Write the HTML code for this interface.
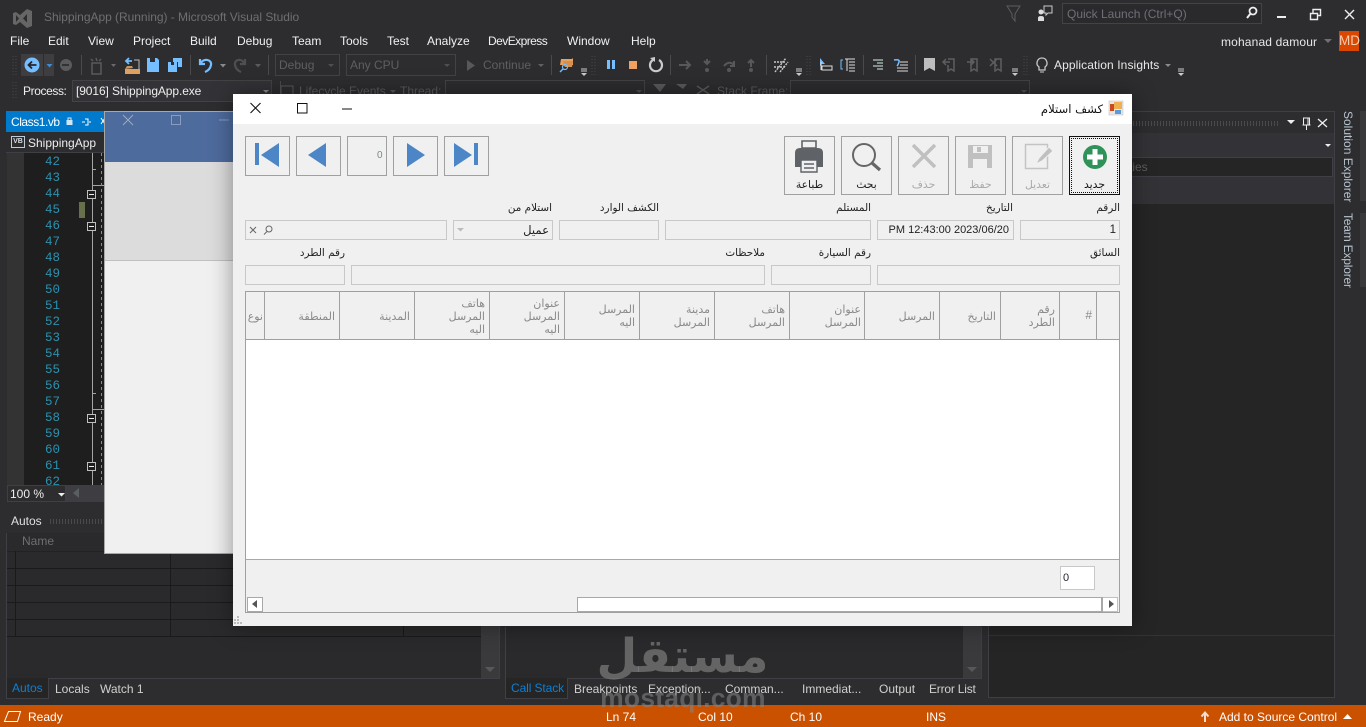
<!DOCTYPE html>
<html lang="en"><head><meta charset="utf-8"><title>ShippingApp</title>
<style>
html,body{margin:0;padding:0;width:1366px;height:727px;overflow:hidden;background:#2d2d30}
body{position:relative;font-family:"Liberation Sans","DejaVu Sans",sans-serif;font-size:12px;color:#f1f1f1}
.a,.t{position:absolute}
.t{white-space:nowrap;line-height:16px}
.ar{font-family:"DejaVu Sans",sans-serif;font-size:10.4px;color:#222;direction:rtl;text-align:right;line-height:13px;position:absolute;white-space:nowrap}
.f{position:absolute;box-sizing:border-box;height:20px;border:1px solid #c8c8c8;background:#f0f0f0;font-size:11px;color:#222}
.b{position:absolute;box-sizing:border-box;border:1px solid #a0a0a0;background:#f0f0f0}
.gh{position:absolute;font-family:"DejaVu Sans",sans-serif;font-size:11px;line-height:13px;color:#8a8a8a;direction:rtl;text-align:right;white-space:nowrap}
.vl{position:absolute;top:291px;height:49px;width:1px;background:#a0a0a0}
.ln{position:absolute;left:45px;width:16px;font-family:"Liberation Mono",monospace;font-size:12.5px;line-height:16px;color:#2b91af}
.m{top:33px}
.g{background:#1a1a1c;position:absolute}
svg{position:absolute;overflow:visible}
</style></head><body>

<!-- title bar -->
<svg style="left:0;top:0" width="1366" height="110" viewBox="0 0 1366 110" fill="none">
<path d="M13 13l3-1 4 3 7-6 5 2v15l-5 2-7-6-4 3-3-1zM16 15v7l3-3.500zM27 14l-4 4.500 4 4z" fill="#666" fill-rule="evenodd"/>
<path d="M1007 6h13l-5 8v7l-3-4v-3z" stroke="#5d5d60"/>
<circle cx="1041" cy="12" r="2.500" fill="#ddd"/><path d="M1038 21v-3q0-2 3-2t3 2v3z" fill="#ddd"/><path d="M1044 6h8v7h-4l-2 2v-2h-2z" stroke="#ccc"/>
<rect x="1062.500" y="3.500" width="199" height="20" stroke="#434346" fill="#2a2a2d"/>
<circle cx="1253" cy="11" r="3.500" stroke="#eee" stroke-width="1.800"/><path d="M1251 13l-4 5" stroke="#eee" stroke-width="2"/>
<path d="M1277 17h9" stroke="#eee" stroke-width="2"/>
<path d="M1310.500 13.500h7v6h-7zM1313 13v-3.500h7.500v6h-2.500" stroke="#eee" stroke-width="1.400"/>
<path d="M1345 10l9 9M1354 10l-9 9" stroke="#eee" stroke-width="1.400"/>

<!-- toolbar 1 -->
<path d="M13 56v19M16 56v19" stroke="#47474a" stroke-dasharray="1 2"/>
<rect x="21" y="54" width="22" height="22" fill="#3e3e40"/><rect x="44" y="54" width="10" height="22" fill="#3e3e40"/>
<circle cx="32" cy="65" r="7.500" fill="#75beff"/><path d="M36.500 65h-7M32 61.500L28.500 65 32 68.500" stroke="#26262a" stroke-width="1.800"/>
<path d="M46.500 64h6l-3 3.500z" fill="#3a8ed8"/>
<circle cx="66" cy="65" r="6" fill="#5a5a5c"/><path d="M62 65h7" stroke="#2d2d30" stroke-width="1.800"/>
<path d="M81.500 55v20" stroke="#4a4a4c"/>
<path d="M92 63h9v11h-9zM96 58l1 3M91 59l2 2M101 59l-2 2" stroke="#5a5a5c" stroke-width="1.500"/>
<path d="M111 64h5l-2.500 3z" fill="#6a6a6c"/>
<path d="M125 69h15v5h-15z" fill="#e0a060"/><path d="M125 69l2-3h5l1 2" fill="#c9955b"/><path d="M127 61h5M129 58l-3 3 3 3" stroke="#75beff" stroke-width="1.800"/><path d="M134 60h5v9" stroke="#bbb"/>
<path d="M147 58h10l2 2v12h-12z" fill="#75beff"/><rect x="150" y="58" width="5" height="4" fill="#2d2d30"/>
<path d="M168 62h9v10h-9z" fill="#75beff"/><path d="M173 58h9v9h-4v-5h-5z" fill="#75beff"/><rect x="171" y="62" width="3" height="3" fill="#2d2d30"/>
<path d="M190.500 55v20" stroke="#4a4a4c"/>
<path d="M200 59v5h5M200.500 63.500C203 58 212 59 211 65q-1 5-6 7" stroke="#75beff" stroke-width="2.200"/>
<path d="M220 64h6l-3 3.500z" fill="#8a8a8c"/>
<path d="M245 59v5h-5M244.500 63.500C242 58 234 59 235 65q1 5 6 7" stroke="#4f4f52" stroke-width="2.200"/>
<path d="M255 64h6l-3 3.500z" fill="#5a5a5c"/>
<path d="M268.500 55v20" stroke="#4a4a4c"/>
<rect x="275.500" y="54.500" width="64" height="21" stroke="#434346"/><path d="M328 64h6l-3 3z" fill="#4f4f52"/>
<rect x="346.500" y="54.500" width="109" height="21" stroke="#434346"/><path d="M444 64h6l-3 3z" fill="#4f4f52"/>
<path d="M467 60l8 5.500-8 5.500z" fill="#58585a"/>
<path d="M538 64h6l-3 3z" fill="#606062"/>
<path d="M551.500 55v20" stroke="#4a4a4c"/>
<path d="M561 59h11l1-1h0v7h-13z" fill="#e8a15d"/><path d="M564 66l-1-5h10l-1 6h-7z" fill="#d88f4a"/><circle cx="565" cy="67" r="2.500" stroke="#75beff" stroke-width="1.200"/><path d="M563 69l-3 3" stroke="#75beff" stroke-width="1.400"/>
<path d="M581 69h6M581 71h6" stroke="#ccc"/><path d="M581 73h6l-3 3z" fill="#ccc"/>
<path d="M592 56v19M595 56v19" stroke="#47474a" stroke-dasharray="1 2"/>
<rect x="607" y="60" width="3" height="9" fill="#75beff"/><rect x="612" y="60" width="3" height="9" fill="#75beff"/>
<rect x="629" y="61" width="8" height="8" fill="#f0a060"/>
<path d="M659 60a6 6 0 1 1-6 0" stroke="#ccc" stroke-width="2.200"/><path d="M650 58l5-1 0 5z" fill="#ccc"/>
<path d="M670.500 55v20" stroke="#4a4a4c"/>
<path d="M679 65h11M686 61l4 4-4 4" stroke="#58585a" stroke-width="2"/>
<path d="M707 59v5M704 61l3 3 3-3" stroke="#58585a" stroke-width="2"/><circle cx="707" cy="70" r="2" fill="#58585a"/>
<path d="M724 66q5-6 10-1M734 61v5h-4" stroke="#58585a" stroke-width="2"/><circle cx="729" cy="70" r="2" fill="#58585a"/>
<path d="M751 67v-6M748 63l3-3 3 3" stroke="#58585a" stroke-width="2"/><circle cx="751" cy="70" r="2" fill="#58585a"/>
<path d="M766.500 55v20" stroke="#4a4a4c"/>
<path d="M775 72l11-14M780 72l8-10M774 62h12M774 67h12" stroke="#c8c8c8" stroke-width="1.400" stroke-dasharray="2 1"/>
<path d="M796 69h6M796 71h6" stroke="#ccc"/><path d="M796 73h6l-3 3z" fill="#ccc"/>
<path d="M807 56v19M810 56v19" stroke="#47474a" stroke-dasharray="1 2"/>
<path d="M820 58v8l2-2h3z" fill="#75beff"/><path d="M822 66h10v4h-10z M821 62v8" stroke="#ddd"/>
<path d="M843 60h-2v9h2" stroke="#75beff"/><path d="M845 59h10M849 62h6M849 65h6M849 68h6M849 71h6M847 59v12" stroke="#ddd"/>
<path d="M863.500 55v20" stroke="#4a4a4c"/>
<path d="M873 60h10M877 63h6M873 66h10M877 69h6" stroke="#d8efe0"/>
<path d="M894 60q6-1 5 2t-2 4" stroke="#75beff" stroke-width="1.500"/><path d="M900 62h8M900 65h8M897 68h11M897 71h11" stroke="#ddd"/>
<path d="M915.500 55v20" stroke="#4a4a4c"/>
<path d="M924 58h11v13l-5.500-3-5.500 3z" fill="#bdbdbd"/>
<path d="M948 59h6v12l-3-2-3 2v-6M943 62h7M946 59l-3 3 3 3" stroke="#5e5e60" stroke-width="1.500"/>
<path d="M971 59h6v12l-3-2-3 2zM967 62h7M971 59l3 3-3 3" stroke="#5e5e60" stroke-width="1.500"/>
<path d="M995 59h6v12l-3-2-3 2zM990 59l7 7M997 59l-7 7" stroke="#5e5e60" stroke-width="1.500"/>
<path d="M1012 69h6M1012 71h6" stroke="#ccc"/><path d="M1012 73h6l-3 3z" fill="#ccc"/>
<path d="M1024 56v19M1027 56v19" stroke="#47474a" stroke-dasharray="1 2"/>
<path d="M1042 58a5 5 0 0 1 3 9v3h-6v-3a5 5 0 0 1 3-9z" stroke="#c8c8c8" stroke-width="1.300"/><path d="M1040 72h4" stroke="#c8c8c8"/>
<path d="M1165 64h6l-3 3z" fill="#8a8a8c"/>
<path d="M1178 69h6M1178 71h6" stroke="#ccc"/><path d="M1178 73h6l-3 3z" fill="#ccc"/>
<!-- toolbar 2 -->
<path d="M13 82v18M16 82v18" stroke="#47474a" stroke-dasharray="1 2"/>
<rect x="72.500" y="80.500" width="199" height="21" stroke="#434346" fill="#333337"/><path d="M263 90h6l-3 3z" fill="#8a8a8c"/>
<path d="M280.500 81v14" stroke="#4a4a4c"/>
<rect x="281" y="86" width="12" height="12" stroke="#5a5a5c"/>
<path d="M390 90h6l-3 3z" fill="#58585a"/>
<rect x="445.500" y="80.500" width="199" height="21" stroke="#434346"/><path d="M636 90h6l-3 3z" fill="#4f4f52"/>
<path d="M653 84h13l-6 8z" fill="#5a5a5c"/><path d="M676 84h11l-4 5z" fill="#5a5a5c"/><path d="M697 86l12 8M709 86l-12 8" stroke="#5a5a5c" stroke-width="1.500"/>
<rect x="790.500" y="80.500" width="239" height="21" stroke="#434346"/><path d="M1021 90h6l-3 3z" fill="#4f4f52"/>
</svg>

<div class="t" style="left:44px;top:9px;color:#6f6f72;letter-spacing:-.03px">ShippingApp (Running) - Microsoft Visual Studio</div>
<div class="t m" style="left:10px">File</div><div class="t m" style="left:48px">Edit</div><div class="t m" style="left:88px">View</div><div class="t m" style="left:133px">Project</div><div class="t m" style="left:190px">Build</div><div class="t m" style="left:237px">Debug</div><div class="t m" style="left:292px">Team</div><div class="t m" style="left:340px">Tools</div><div class="t m" style="left:387px">Test</div><div class="t m" style="left:427px">Analyze</div><div class="t m" style="left:488px;letter-spacing:-.55px">DevExpress</div><div class="t m" style="left:567px">Window</div><div class="t m" style="left:631px">Help</div>
<div class="t" style="left:1067px;top:6px;color:#6f6f78">Quick Launch (Ctrl+Q)</div>
<div class="t" style="left:1221px;top:34px;letter-spacing:.15px;color:#e8e8e8">mohanad damour</div>
<svg style="left:1324px;top:39px" width="8" height="5"><path d="M0 0h8l-4 4z" fill="#707072"/></svg>
<div class="t" style="left:1339px;top:31px;width:20px;height:20px;background:#d94700;line-height:20px;text-align:center;color:#f7cdb0;font-size:13.5px">MD</div>
<div class="t" style="left:279px;top:57px;color:#5f5f62">Debug</div>
<div class="t" style="left:350px;top:57px;color:#5f5f62">Any CPU</div>
<div class="t" style="left:483px;top:57px;color:#5f5f62">Continue</div>
<div class="t" style="left:1054px;top:57px;color:#e8e8e8;letter-spacing:.1px">Application Insights</div>
<div class="t" style="left:23px;top:83px;color:#eee;letter-spacing:-.4px">Process:</div>
<div class="t" style="left:76px;top:83px;color:#eee;letter-spacing:-.1px">[9016] ShippingApp.exe</div>
<div class="t" style="left:299px;top:83px;color:#5a5a5d">Lifecycle Events</div>
<div class="t" style="left:400px;top:83px;color:#5a5a5d">Thread:</div>
<div class="t" style="left:717px;top:83px;color:#5a5a5d">Stack Frame:</div>

<!-- left editor -->
<div class="a" style="left:6px;top:111px;width:100px;height:21px;background:#007acc"></div>
<div class="t" style="left:11px;top:114px;color:#fff;letter-spacing:-.45px">Class1.vb</div>
<svg style="left:65px;top:116px" width="40" height="12" fill="none"><rect x="1.500" y="4" width="6" height="5" fill="#cfe6f7"/><path d="M3 4V2h3v2" stroke="#cfe6f7"/><path d="M20 3h3v6h-3M17 6h3M24 6h2" stroke="#fff"/><path d="M36 2l4 6M40 2l-4 6" stroke="#fff"/></svg>
<div class="a" style="left:6px;top:132px;width:100px;height:21px;background:#2d2d30;border-bottom:1px solid #3f3f46;box-sizing:border-box"></div>
<div class="a" style="left:11px;top:136px;width:12px;height:10px;border:1px solid #bcd;font:bold 7px/10px 'Liberation Sans',sans-serif;text-align:center;color:#ddd">VB</div>
<div class="t" style="left:28px;top:135px;color:#eee">ShippingApp</div>
<div class="a" style="left:7px;top:153px;width:17px;height:332px;background:#333333"></div>
<div class="a" style="left:24px;top:153px;width:80px;height:332px;background:#1e1e1e"></div>
<div class="ln" style="top:154px">42</div><div class="ln" style="top:170px">43</div><div class="ln" style="top:186px">44</div><div class="ln" style="top:202px">45</div><div class="ln" style="top:218px">46</div><div class="ln" style="top:234px">47</div><div class="ln" style="top:250px">48</div><div class="ln" style="top:266px">49</div><div class="ln" style="top:282px">50</div><div class="ln" style="top:298px">51</div><div class="ln" style="top:314px">52</div><div class="ln" style="top:330px">53</div><div class="ln" style="top:346px">54</div><div class="ln" style="top:362px">55</div><div class="ln" style="top:378px">56</div><div class="ln" style="top:394px">57</div><div class="ln" style="top:410px">58</div><div class="ln" style="top:426px">59</div><div class="ln" style="top:442px">60</div><div class="ln" style="top:458px">61</div>
<div class="a" style="left:0;top:0;width:104px;height:485px;overflow:hidden;pointer-events:none"><div class="ln" style="top:474px">62</div></div>
<svg style="left:0;top:150px" width="106" height="340" fill="none">
<path d="M92.500 3v332" stroke="#a5a5a5"/>
<path d="M93 19.500h3M93 35.500h11M93 243.500h3M93 259.500h11" stroke="#a5a5a5"/>
<path d="M101.500 3v332" stroke="#8a8a8a" stroke-dasharray="3 3"/>
<rect x="79" y="52" width="6" height="16" fill="#66704c"/>
<g fill="#1e1e1e" stroke="#c0c0c0"><rect x="87.500" y="40.500" width="8" height="8"/><rect x="87.500" y="72.500" width="8" height="8"/><rect x="87.500" y="264.500" width="8" height="8"/><rect x="87.500" y="312.500" width="8" height="8"/></g>
<path d="M89 44.500h5M89 76.500h5M89 268.500h5M89 316.500h5" stroke="#eee"/>
</svg>
<div class="a" style="left:7px;top:485px;width:59px;height:17px;background:#2d2d30;border:1px solid #3f3f46;box-sizing:border-box"></div>
<div class="a" style="left:66px;top:485px;width:38px;height:17px;background:#3e3e42"></div>
<div class="t" style="left:10px;top:486px;color:#eee">100 %</div>
<svg style="left:58px;top:493px" width="7" height="4"><path d="M0 0h7l-3.500 3.500z" fill="#eee"/></svg>
<svg style="left:73px;top:488px" width="6" height="10"><path d="M6 0v10L0 5z" fill="#5a5f5f"/></svg>

<!-- autos -->
<div class="a" style="left:6px;top:511px;width:494px;height:167px;border:1px solid #3f3f46;border-bottom:0;box-sizing:border-box;background:#2a2a2c"></div>
<div class="a" style="left:6px;top:511px;width:494px;height:22px;background:#2d2d30"></div>
<div class="t" style="left:11px;top:513px;color:#e0e0e0">Autos</div>
<div class="a" style="left:50px;top:519px;width:430px;height:5px;background:repeating-linear-gradient(90deg,#4a4a4c 0 1px,transparent 1px 3px)"></div>
<div class="t" style="left:22px;top:533px;color:#6f6f72">Name</div>
<div class="a" style="left:7px;top:533px;width:492px;height:18px;border-bottom:1px solid #222"></div>
<div class="g" style="left:15px;top:551px;width:1px;height:86px"></div><div class="g" style="left:170px;top:551px;width:1px;height:86px"></div><div class="g" style="left:403px;top:551px;width:1px;height:86px"></div>
<div class="g" style="left:7px;top:568px;width:474px;height:1px"></div><div class="g" style="left:7px;top:585px;width:474px;height:1px"></div><div class="g" style="left:7px;top:602px;width:474px;height:1px"></div><div class="g" style="left:7px;top:619px;width:474px;height:1px"></div><div class="g" style="left:7px;top:636px;width:474px;height:1px"></div>
<div class="a" style="left:481px;top:620px;width:18px;height:58px;background:#3a3a3d"></div>
<svg style="left:485px;top:667px" width="10" height="6"><path d="M0 0h10L5 5z" fill="#58585a"/></svg>
<div class="a" style="left:48px;top:678px;width:452px;height:1px;background:#3f3f46"></div>
<div class="a" style="left:6px;top:678px;width:43px;height:21px;background:#252526;border:1px solid #3f3f46;border-top:0;box-sizing:border-box"></div>
<div class="t" style="left:12px;top:680px;color:#0e7fd4">Autos</div><div class="t" style="left:55px;top:681px;color:#d0d0d0">Locals</div><div class="t" style="left:100px;top:681px;color:#d0d0d0">Watch 1</div>

<!-- call stack -->
<div class="a" style="left:505px;top:627px;width:477px;height:51px;background:#2a2a2c;border:1px solid #3f3f46;border-top:0;border-bottom:0;box-sizing:border-box"></div>
<div class="a" style="left:963px;top:620px;width:18px;height:58px;background:#3a3a3d"></div>
<svg style="left:967px;top:667px" width="10" height="6"><path d="M0 0h10L5 5z" fill="#58585a"/></svg>
<div class="a" style="left:567px;top:678px;width:415px;height:1px;background:#3f3f46"></div>
<div class="a" style="left:505px;top:678px;width:63px;height:21px;background:#252526;border:1px solid #3f3f46;border-top:0;box-sizing:border-box"></div>
<div class="t" style="left:511px;top:680px;color:#0e7fd4;letter-spacing:-.1px">Call Stack</div><div class="t" style="left:574px;top:681px;color:#d0d0d0">Breakpoints</div><div class="t" style="left:648px;top:681px;color:#d0d0d0">Exception...</div><div class="t" style="left:725px;top:681px;color:#d0d0d0">Comman...</div><div class="t" style="left:802px;top:681px;color:#d0d0d0">Immediat...</div><div class="t" style="left:879px;top:681px;color:#d0d0d0">Output</div><div class="t" style="left:929px;top:681px;color:#d0d0d0;letter-spacing:-.2px">Error List</div>

<!-- right panel -->
<div class="a" style="left:988px;top:111px;width:347px;height:587px;box-sizing:border-box;border:1px solid #3f3f46;background:#252526"></div>
<div class="a" style="left:989px;top:112px;width:345px;height:21px;background:#2d2d30"></div>
<div class="a" style="left:989px;top:133px;width:345px;height:71px;background:#333337"></div>
<div class="a" style="left:989px;top:157px;width:344px;height:20px;background:#252526;border:1px solid #3f3f46;box-sizing:border-box"></div>
<div class="t" style="left:1125px;top:159px;color:#5f5f62">rties</div>
<div class="a" style="left:1130px;top:121px;width:150px;height:5px;background:repeating-linear-gradient(90deg,#4a4a4c 0 1px,transparent 1px 3px)"></div>
<div class="a" style="left:989px;top:635px;width:345px;height:1px;background:#333337"></div>
<svg style="left:1285px;top:116px" width="45" height="50" fill="none">
<path d="M2 4h8l-4 4z" fill="#eee"/><path d="M18.500 2h6v7h-6zM17.500 9h8M21.500 9v5M23 2v7" stroke="#eee"/><path d="M33 3l9 8M42 3l-9 8" stroke="#eee" stroke-width="1.300"/>
<path d="M40 28h6l-3 3z" fill="#eee"/>
</svg>
<div class="t" style="left:1340px;top:111px;transform-origin:0 0;transform:translate(16px,0) rotate(90deg);color:#b8c4cf">Solution Explorer</div>
<div class="t" style="left:1340px;top:213px;transform-origin:0 0;transform:translate(16px,0) rotate(90deg);color:#b8c4cf;letter-spacing:-.2px">Team Explorer</div>
<div class="a" style="left:1360px;top:111px;width:6px;height:90px;background:#39393c"></div>
<div class="a" style="left:1360px;top:213px;width:6px;height:74px;background:#39393c"></div>

<!-- status -->
<div class="a" style="left:0;top:705px;width:1366px;height:22px;background:#ca5100"></div>
<svg style="left:4px;top:711px" width="18" height="11" fill="none"><path d="M4.500.5h12l-3 10h-13z" stroke="#fff"/></svg>
<div class="t" style="left:28px;top:709px;color:#fff">Ready</div><div class="t" style="left:606px;top:709px;color:#fff">Ln 74</div><div class="t" style="left:698px;top:709px;color:#fff">Col 10</div><div class="t" style="left:790px;top:709px;color:#fff">Ch 10</div><div class="t" style="left:926px;top:709px;color:#fff">INS</div><div class="t" style="left:1219px;top:709px;color:#fff">Add to Source Control</div>
<svg style="left:1200px;top:711px" width="14" height="12" fill="none"><path d="M5 11V3M1.500 5.500L5 1.500l3.500 4" stroke="#f2ddd0" stroke-width="2"/></svg>
<svg style="left:1343px;top:714px" width="9" height="5"><path d="M0 5h9L4.500 0z" fill="#fff"/></svg>

<!-- background form -->
<div class="a" style="left:104px;top:111px;width:129px;height:443px;background:#f0f0f0;border:1px solid #a8a8a8;border-right:0;box-sizing:border-box"></div>
<div class="a" style="left:105px;top:112px;width:128px;height:50px;background:#4e6b9e"></div>
<div class="a" style="left:105px;top:162px;width:128px;height:99px;background:#dcdcdc;border-bottom:1px solid #c0c0c0;box-sizing:border-box"></div>
<svg style="left:122px;top:114px" width="110" height="14" fill="none"><path d="M1 1l10 10M11 1L1 11" stroke="#9ab"/><rect x="49.500" y="1.500" width="9" height="9" stroke="#8a9cc0"/><path d="M97 6h10" stroke="#8a9cc0"/></svg>

<!-- main form -->
<div class="a" style="left:233px;top:94px;width:899px;height:532px;background:#f0f0f0;box-shadow:0 0 22px rgba(0,0,0,.4)"></div>
<div class="a" style="left:233px;top:94px;width:899px;height:30px;background:#fff"></div>
<svg style="left:249px;top:101px" width="110" height="14" fill="none"><path d="M1.500 2l10 10M11.500 2l-10 10" stroke="#111" stroke-width="1.100"/><rect x="48.500" y="2.500" width="9.500" height="9.500" stroke="#111"/><path d="M93 8h10" stroke="#111"/></svg>
<div class="ar" style="right:263px;top:102px;font-size:11.6px;line-height:14px;color:#111">كشف استلام</div>
<svg style="left:1109px;top:101px" width="14" height="15"><rect width="14" height="14" fill="#e6e6e6" stroke="#bbb" stroke-width=".5"/><rect x="1" y="3" width="4" height="7" fill="#c94a20"/><rect x="5" y="1" width="8" height="7" fill="#f0b050"/><rect x="6" y="9" width="6" height="4" fill="#5a9ad8"/></svg>

<!-- nav buttons -->
<div class="b" style="left:245px;top:136px;width:45px;height:40px"></div><div class="b" style="left:296px;top:136px;width:45px;height:40px"></div><div class="b" style="left:347px;top:136px;width:40px;height:40px"></div><div class="b" style="left:393px;top:136px;width:45px;height:40px"></div><div class="b" style="left:444px;top:136px;width:45px;height:40px"></div>
<div class="t" style="left:377px;top:148px;font-size:10px;color:#7a8a7a">0</div>
<svg style="left:0;top:0" width="1366" height="727">
<path fill="#4d86c6" d="M255 143h4v22h-4zM261 155L279 143v24zM308 155L326 143v24zM407 143l18 12-18 12zM454 143l18 12-18 12zM474 143h4v22h-4z"/>
</svg>

<!-- action buttons -->
<div class="b" style="left:784px;top:136px;width:51px;height:59px"></div><div class="b" style="left:841px;top:136px;width:51px;height:59px"></div><div class="b" style="left:898px;top:136px;width:51px;height:59px"></div><div class="b" style="left:955px;top:136px;width:51px;height:59px"></div><div class="b" style="left:1012px;top:136px;width:51px;height:59px"></div>
<div class="b" style="left:1069px;top:136px;width:51px;height:59px;border-color:#111"><div style="position:absolute;inset:1px;border:1px dotted #111"></div></div>
<svg style="left:0;top:0" width="1366" height="727" fill="none">
<path d="M802 141h14v7h-14z" stroke="#5f6368" stroke-width="1.600"/><path d="M795 153q0-5 5-5h18q5 0 5 5v14h-28z" fill="#5f6368"/><path d="M801 160h16v12h-16z" fill="#f0f0f0" stroke="#5f6368" stroke-width="1.400"/><path d="M804 164h10M804 168h10" stroke="#5f6368" stroke-width="1.400"/>
<circle cx="864" cy="155" r="11" stroke="#666" stroke-width="2"/><path d="M872 163l8 7" stroke="#666" stroke-width="3.200"/>
<path d="M913 145l22 22M935 145l-22 22" stroke="#c0c0c0" stroke-width="3.500"/>
<path fill="#c0c0c0" d="M968 145h24v23h-24z"/><rect x="973" y="146" width="15" height="7" fill="#f0f0f0"/><rect x="977" y="147" width="4" height="5" fill="#c0c0c0"/><rect x="973" y="159" width="14" height="9" fill="#f0f0f0"/>
<path d="M1025.500 144.500h22v24h-22z" stroke="#c4c4c4" stroke-width="1.500"/><path d="M1036 164l3-6 10-11 4 4-11 10z" fill="#c0c0c0" stroke="#f0f0f0"/>
<circle cx="1095" cy="157" r="12" fill="#2e9259"/><path d="M1095 149v16M1087 157h16" stroke="#fff" stroke-width="5"/>
</svg>
<div class="ar" style="left:784px;width:51px;text-align:center;top:178px;color:#222;font-size:10.8px">طباعة</div>
<div class="ar" style="left:841px;width:51px;text-align:center;top:178px;color:#222;font-size:10.8px">بحث</div>
<div class="ar" style="left:898px;width:51px;text-align:center;top:178px;color:#aaa;font-size:10.8px">حذف</div>
<div class="ar" style="left:955px;width:51px;text-align:center;top:178px;color:#aaa;font-size:10.8px">حفظ</div>
<div class="ar" style="left:1012px;width:51px;text-align:center;top:178px;color:#aaa;font-size:10.8px">تعديل</div>
<div class="ar" style="left:1069px;width:51px;text-align:center;top:178px;color:#111;font-size:10.8px">جديد</div>

<!-- labels -->
<div class="ar" style="right:246px;top:202px">الرقم</div>
<div class="ar" style="right:353px;top:202px">التاريخ</div>
<div class="ar" style="right:495px;top:202px">المستلم</div>
<div class="ar" style="right:707px;top:202px">الكشف الوارد</div>
<div class="ar" style="right:814px;top:202px">استلام من</div>
<div class="ar" style="right:246px;top:247px">السائق</div>
<div class="ar" style="right:495px;top:247px">رقم السيارة</div>
<div class="ar" style="right:601px;top:247px">ملاحظات</div>
<div class="ar" style="right:1021px;top:247px">رقم الطرد</div>

<!-- fields -->
<div class="f" style="left:245px;top:220px;width:202px"></div>
<svg style="left:249px;top:225px" width="24" height="11" fill="none"><path d="M1 2l6 6M7 2L1 8" stroke="#666"/><circle cx="20" cy="4" r="3" stroke="#666"/><path d="M18 6.500l-3 3" stroke="#666"/></svg>
<div class="f" style="left:453px;top:220px;width:100px"></div>
<svg style="left:457px;top:228px" width="7" height="4"><path d="M0 0h7L3.500 3.500z" fill="#bbb"/></svg>
<div class="ar" style="right:817px;top:224px;font-size:11.6px;color:#222">عميل</div>
<div class="f" style="left:559px;top:220px;width:100px"></div>
<div class="f" style="left:665px;top:220px;width:206px"></div>
<div class="f" style="left:877px;top:220px;width:137px"></div>
<div class="t" style="left:880px;top:222px;width:129px;text-align:right;font-size:11px;color:#222">PM 12:43:00 2023/06/20</div>
<div class="f" style="left:1020px;top:220px;width:100px"></div>
<div class="t" style="left:1020px;top:222px;width:96px;text-align:right;font-size:11.500px;color:#222">1</div>
<div class="f" style="left:245px;top:265px;width:100px"></div>
<div class="f" style="left:351px;top:265px;width:414px"></div>
<div class="f" style="left:771px;top:265px;width:100px"></div>
<div class="f" style="left:877px;top:265px;width:243px"></div>

<!-- grid -->
<div class="a" style="left:245px;top:291px;width:875px;height:322px;border:1px solid #a0a0a0;box-sizing:border-box;background:#f0f0f0"></div>
<div class="a" style="left:246px;top:339px;width:873px;height:221px;background:#fff;border-top:1px solid #a0a0a0;border-bottom:1px solid #a8a8a8;box-sizing:border-box"></div>
<div class="vl" style="left:264px"></div><div class="vl" style="left:339px"></div><div class="vl" style="left:414px"></div><div class="vl" style="left:489px"></div><div class="vl" style="left:564px"></div><div class="vl" style="left:639px"></div><div class="vl" style="left:714px"></div><div class="vl" style="left:789px"></div><div class="vl" style="left:864px"></div><div class="vl" style="left:939px"></div><div class="vl" style="left:1000px"></div><div class="vl" style="left:1059px"></div><div class="vl" style="left:1096px"></div>
<div class="gh" style="left:1060px;width:32px;top:309px;font-family:'Liberation Sans',sans-serif;font-size:12px">#</div>
<div class="gh" style="left:1002px;width:53px;top:303px">رقم<br>الطرد</div>
<div class="gh" style="left:941px;width:55px;top:310px">التاريخ</div>
<div class="gh" style="left:866px;width:69px;top:310px">المرسل</div>
<div class="gh" style="left:791px;width:70px;top:303px">عنوان<br>المرسل</div>
<div class="gh" style="left:716px;width:69px;top:303px">هاتف<br>المرسل</div>
<div class="gh" style="left:641px;width:69px;top:303px">مدينة<br>المرسل</div>
<div class="gh" style="left:566px;width:69px;top:303px">المرسل<br>اليه</div>
<div class="gh" style="left:491px;width:69px;top:297px">عنوان<br>المرسل<br>اليه</div>
<div class="gh" style="left:416px;width:69px;top:297px">هاتف<br>المرسل<br>اليه</div>
<div class="gh" style="left:341px;width:69px;top:310px">المدينة</div>
<div class="gh" style="left:266px;width:69px;top:310px">المنطقة</div>
<div class="gh" style="left:246px;width:17px;top:310px;overflow:hidden">نوع</div>
<div class="a" style="left:1060px;top:566px;width:35px;height:24px;background:#fff;border:1px solid #c8c8c8;box-sizing:border-box;font-size:11px;line-height:23px;padding-left:2px;color:#223">0</div>
<!-- scrollbar -->
<div class="a" style="left:247px;top:597px;width:16px;height:15px;background:#fff;border:1px solid #a8a8a8;box-sizing:border-box"></div>
<svg style="left:252px;top:600px" width="6" height="9"><path d="M5 0v8L0 4z" fill="#555"/></svg>
<div class="a" style="left:577px;top:597px;width:526px;height:15px;background:#fff;border:1px solid #a8a8a8;border-right-width:2px;box-sizing:border-box"></div>
<div class="a" style="left:1103px;top:597px;width:15px;height:15px;background:#fff;border:1px solid #c0c0c0;border-left:0;box-sizing:border-box"></div>
<svg style="left:1109px;top:600px" width="6" height="9"><path d="M0 0v8l5-4z" fill="#555"/></svg>
<svg style="left:234px;top:616px" width="10" height="9"><path d="M3 0h2v2H3zM0 3h2v2H0zM3 3h2v2H3zM0 6h2v2H0zM3 6h2v2H3zM6 6h2v2H6z" fill="#bbb"/></svg>

<!-- watermark -->
<div class="a" style="left:585px;top:612px;width:195px;text-align:center;font-family:'DejaVu Sans',sans-serif;font-weight:bold;font-size:47px;line-height:90px;color:rgba(135,135,135,.62);direction:rtl;white-space:nowrap">مستقل</div>
<div class="a" style="left:590px;top:684px;width:186px;text-align:center;font-family:'Liberation Sans',sans-serif;font-weight:bold;font-size:26.5px;line-height:28px;letter-spacing:.2px;color:rgba(135,135,135,.55);white-space:nowrap">mostaqi.com</div>
</body></html>
